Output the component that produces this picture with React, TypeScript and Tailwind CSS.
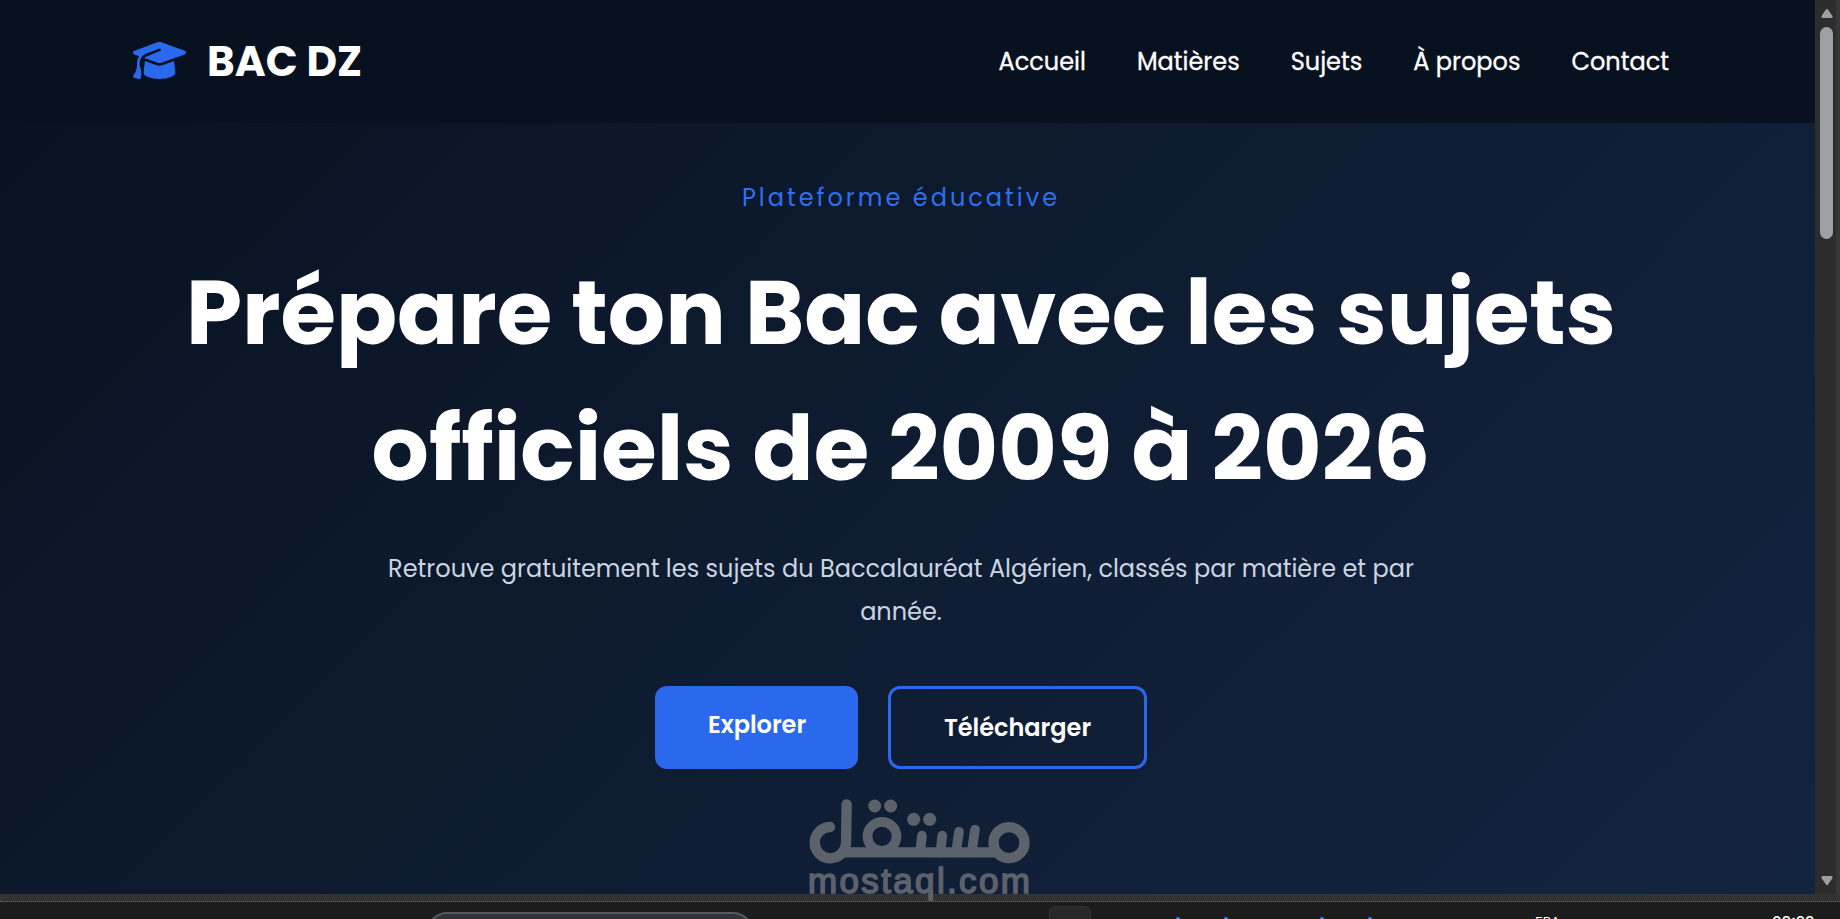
import { FaGraduationCap } from "react-icons/fa6";

const navLinks = ["Accueil", "Matières", "Sujets", "À propos", "Contact"];

function Header() {
  return (
    <header className="flex h-[123px] shrink-0 items-center justify-between bg-[#07111f] pr-[146px] pl-[133px]">
      <a href="#" className="flex items-center gap-[21px]">
        <FaGraduationCap className="mb-[2px] h-[43px] w-[53px] text-[#2a69ed]" />
        <span className="text-[42px] leading-none font-bold">
          BAC DZ
        </span>
      </a>

      <nav className="flex gap-[51px] text-2xl leading-9 [-webkit-text-stroke:0.3px_white]">
        {navLinks.map((label) => (
          <a key={label} href="#">
            {label}
          </a>
        ))}
      </nav>
    </header>
  );
}

function Hero() {
  return (
    <section className="flex flex-1 flex-col items-center pt-[57px] pr-[13px] text-center">
      <p className="h-9 text-2xl leading-9 tracking-[3px] text-[#2f6ff0]">
        Plateforme éducative
      </p>

      <h1 className="mt-[29px] text-[90px] leading-[136px] font-bold">
        Prépare ton Bac avec les sujets
        <br />
        officiels de 2009 à 2026
      </h1>

      <p className="mt-[30px] w-[1050px] text-2xl leading-[43px] text-[#cbd5e1]">
        Retrouve gratuitement les sujets du Baccalauréat Algérien, classés par matière et par année.
      </p>

      <div className="mt-[53px] flex h-[83px] gap-[30px] text-2xl leading-9 font-semibold">
        <a href="#" className="w-[203px] rounded-xl bg-[#2a69ed] pt-[21px] pl-px">
          Explorer
        </a>
        <a
          href="#"
          className="w-[259px] rounded-xl border-3 border-[#2a69ed] pt-[21px]"
        >
          Télécharger
        </a>
      </div>
    </section>
  );
}

function Scrollbar() {
  return (
    <div className="flex w-[25px] flex-col items-center border-r-4 border-[#373737] bg-[#2c2c2c] pt-[9px] pb-[9px] pl-[2px]">
      <svg width="12" height="9" viewBox="0 0 12 9" fill="#9c9fa4">
        <path d="M5 .5Q6-.5 7 .5L11.5 7Q12 9 10 9H2Q0 9 .5 7Z" />
      </svg>
      <div className="mt-[9px] h-[212px] w-[13px] rounded-full bg-[#9c9fa4]" />
      <svg width="12" height="9" viewBox="0 0 12 9" fill="#9c9fa4" className="mt-auto">
        <path d="M5 8.5Q6 9.5 7 8.5L11.5 2Q12 0 10 0H2Q0 0 .5 2Z" />
      </svg>
    </div>
  );
}

function Taskbar() {
  return (
    <footer className="relative h-[25px] shrink-0 overflow-hidden bg-[#1c1c1c] font-['Inter',sans-serif]">
      <div className="h-2 border-b border-dotted border-[#6a6a6a] bg-[#333333]" />
      <div className="absolute top-[18px] left-[427px] h-10 w-[326px] rounded-[20px] border-2 border-[#555a62] bg-[#303434]" />
      <div className="absolute top-3 left-[1049px] h-10 w-[42px] rounded-md border border-[#333333] bg-[#282828]" />
      <div className="absolute top-[23px] left-[1176px] size-1 rounded-full bg-[#4b87f5]" />
      <div className="absolute top-[23px] left-[1224px] size-1 rounded-full bg-[#4b87f5]" />
      <div className="absolute top-[23px] left-[1320px] size-1 rounded-full bg-[#4b87f5]" />
      <div className="absolute top-[23px] left-[1368px] size-1 rounded-full bg-[#4b87f5]" />
      <span className="absolute top-[20px] left-[1535px] text-[13px] leading-4">FRA</span>
      <span className="absolute top-[20px] left-[1772px] text-[15px] leading-[15px] font-medium">
        09:23
      </span>
    </footer>
  );
}

function Watermark() {
  return (
    <div className="absolute top-[795px] left-[809px] w-[221px] text-[#5c626c]">
      <svg
        width="221"
        height="70"
        viewBox="87 45 663 210"
        fill="none"
        stroke="currentColor"
        strokeWidth="31"
        strokeLinecap="round"
      >
        <circle cx="687" cy="188" r="46.5" />
        <path d="M190 217H640" />
        <path d="M150 141A47 47 0 1 0 198 192L200 73" />
        <circle cx="306" cy="169" r="43.5" strokeWidth="29" />
        <path
          strokeWidth="29"
          d="M426 167L420 217M487 167L481 217M537 155L528 217M585 149L575 217"
        />
        <g fill="currentColor" stroke="none">
          <circle cx="284" cy="78" r="19.5" />
          <circle cx="332" cy="78" r="19.5" />
          <circle cx="401" cy="118" r="19.5" />
          <circle cx="449" cy="118" r="19.5" />
        </g>
      </svg>
      <p className="-mt-[2px] -ml-[1px] font-['Liberation_Sans',sans-serif] text-[35px] leading-[36px] tracking-[2.35px] [-webkit-text-stroke:1.6px_#5c626c]">
        mostaql.com
      </p>
    </div>
  );
}

export default function App() {
  return (
    <div className="relative flex h-[919px] w-[1840px] flex-col overflow-hidden font-['Poppins','Inter',sans-serif] text-white">
      <div className="flex h-[894px]">
        <main className="flex w-[1815px] flex-col bg-[linear-gradient(135deg,#07121f_0%,#0f1d33_55%,#13243f_100%)]">
          <Header />
          <Hero />
        </main>
        <Scrollbar />
      </div>
      <Taskbar />
      <Watermark />
    </div>
  );
}
